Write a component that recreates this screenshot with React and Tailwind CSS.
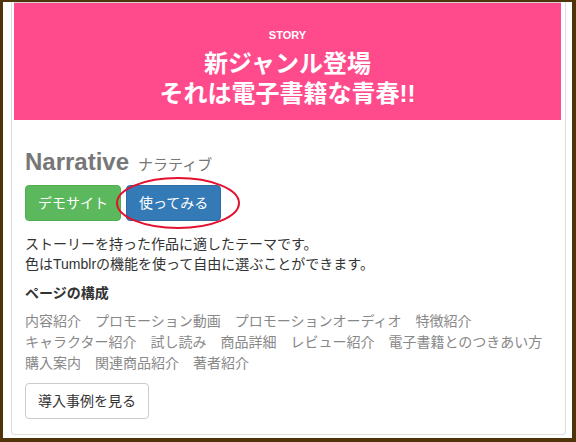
const SECTIONS = [
  "内容紹介",
  "プロモーション動画",
  "プロモーションオーディオ",
  "特徴紹介",
  "キャラクター紹介",
  "試し読み",
  "商品詳細",
  "レビュー紹介",
  "電子書籍とのつきあい方",
  "購入案内",
  "関連商品紹介",
  "著者紹介",
];

export default function App() {
  return (
    <div className="w-[576px] h-[442px] bg-[#4f3309] pl-[3px] pr-[4px] pt-[2px] pb-[4px] font-['Liberation_Sans','Noto_Sans_CJK_JP',sans-serif]">
      <div className="h-full bg-white pl-[8px] pr-[6px] pb-[3px]">
        {/* card */}
        <div className="h-full border-x border-b border-[#dddddd] rounded-b-[4px] flex flex-col">
          {/* hero banner */}
          <div className="ml-[2px] mr-[4px] border-t border-[#d4d4d4]">
            <div className="h-[117px] bg-[#ff4b8c] flex flex-col items-center text-white font-bold pt-[25px]">
              <div className="text-[11px] leading-[14px]">STORY</div>
              <div className="mt-[7px] text-[24px] leading-[30px] text-center">
                <div>新ジャンル登場</div>
                <div>それは電子書籍な青春!!</div>
              </div>
            </div>
          </div>

          <div className="px-[13px]">
            <h2 className="mt-[27px] leading-[30px] flex items-baseline gap-[9px] text-[#777777]">
              <span className="text-[24px] font-bold">Narrative</span>
              <span className="text-[15px]">ナラティブ</span>
            </h2>

            <div className="relative mt-[5px] flex gap-[5px]">
              <button className="h-[36px] px-[12px] rounded-[4px] bg-[#5cb85c] border border-[#4cae4c] text-white text-[14px]">
                デモサイト
              </button>
              <button className="h-[36px] px-[12px] rounded-[4px] bg-[#337ab7] border border-[#2e6da4] text-white text-[14px]">
                使ってみる
              </button>
              {/* red marker circle */}
              <svg className="absolute left-[90px] top-[-9px] pointer-events-none" width="126" height="54" viewBox="0 0 126 54">
                <ellipse cx="63" cy="27" rx="61" ry="25" fill="none" stroke="#e3102f" strokeWidth="2" />
              </svg>
            </div>

            <div className="mt-[13px] text-[14px] leading-[20px] text-[#333333]">
              <p>ストーリーを持った作品に適したテーマです。</p>
              <p>色はTumblrの機能を使って自由に選ぶことができます。</p>
            </div>

            <h3 className="mt-[9px] text-[14px] leading-[20px] font-bold text-[#333333]">ページの構成</h3>

            <ul className="mt-[8px] flex flex-wrap gap-x-[14px] text-[14px] leading-[21px] text-[#888888]">
              {SECTIONS.map((s) => (
                <li key={s}>{s}</li>
              ))}
            </ul>

            <button className="mt-[9px] h-[36px] px-[12px] rounded-[4px] bg-white border border-[#cccccc] text-[#333333] text-[14px]">
              導入事例を見る
            </button>
          </div>
        </div>
      </div>
    </div>
  );
}
